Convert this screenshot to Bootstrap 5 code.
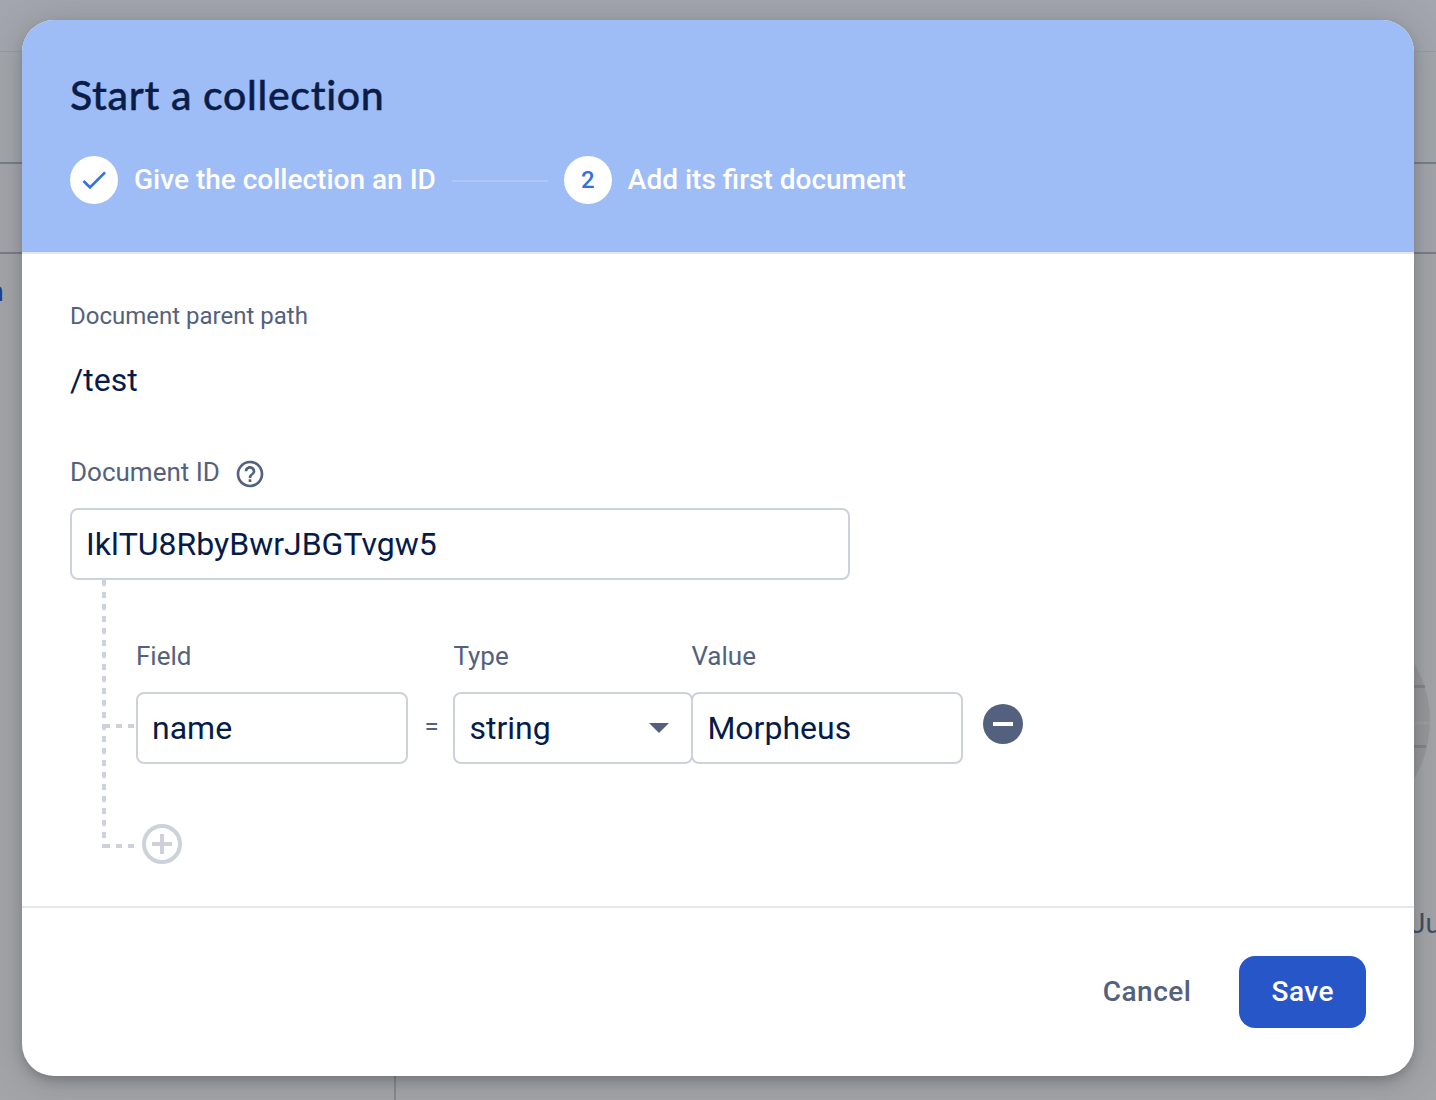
<!DOCTYPE html>
<html lang="en">
<head>
<meta charset="utf-8">
<meta name="viewport" content="width=device-width, initial-scale=1">
<title>Start a collection</title>
<link href="https://cdn.jsdelivr.net/npm/bootstrap@5.3.0/dist/css/bootstrap.min.css" rel="stylesheet">
<style>
html, body { height: 1100px; overflow: hidden; }
body { font-family: Roboto, "Noto Sans", sans-serif; background: #a4a5a8; color: #061b49; padding: 20px 22px; }
.bg-page { z-index: 0; color: #434d64; }
.bg-top { height: 52px; background: #a3a6ae; border-bottom: 1px solid #999ca2; }
.bg-title { height: 112px; background: #a3a6ab; border-bottom: 2px solid #777d8a; }
.bg-tools { height: 90px; background: #a3a5ab; border-bottom: 2px solid #777d8a; }
.bg-side { width: 396px; border-right: 2px solid #858992; }
.bg-link { color: #1d3f94; font-size: 28px; font-weight: 500; left: -12px; top: 20px; line-height: 36px; }
.bg-art { right: 6px; top: 354px; width: 226px; height: 226px; }
.bg-note { left: 1410px; top: 652px; font-size: 28px; line-height: 36px; white-space: nowrap; }
.dialog { z-index: 1; height: 1056px; border: 0; border-radius: 32px; overflow: hidden;
  box-shadow: 0 6px 12px -2px rgba(40,48,52,.3), 0 4px 36px 2px rgba(60,66,66,.22); }
.dialog-head { height: 234px; padding: 48px; background: #9ebcf6; border-bottom: 2px solid #e6e7ec; }
.dialog-title { font-family: Lato, sans-serif; font-size: 41px; line-height: 54px; font-weight: 500; letter-spacing: .67px; color: #0a1c48; margin: 0 0 34px; -webkit-text-stroke: .45px #0a1c48; }
.step-dot { width: 48px; height: 48px; background: #fff; color: #3570e3; font-size: 24px; font-weight: 500; }
.step-text { font-size: 28px; line-height: 48px; font-weight: 500; color: #fff; }
.step-rule { width: 96px; height: 2px; margin: 1px 16px 0; background: #afc8f8; }
.dialog-main { height: 654px; padding: 46px 48px 0; border-bottom: 2px solid #e6e7ec; }
.tx-muted { color: #54617e; }
.cap-sm { font-size: 24px; line-height: 32px; }
.cap-md { font-size: 26px; line-height: 32px; }
.path-text { font-size: 32px; line-height: 40px; margin-top: 28px; }
.id-row { margin-top: 52px; height: 40px; margin-bottom: 16px; }
.help { margin: 4px 0 0 14px; }
.dialog .form-control { height: 72px; border: 2px solid #cdd1db; border-radius: 8px; font-size: 32px; line-height: 40px; padding: 0 14px; color: #061b49; background-color: #fff; }
.id-input { width: 780px; }
.tree { width: 66px; height: 272px; flex: none; }
.fields { padding-top: 60px; }
.cap-row { height: 32px; margin-bottom: 20px; }
.dialog .w-field { width: 272px; }
.dialog .w-type { width: 240px; margin-right: -2px; }
.eq { width: 45.400px; font-size: 26px; padding-left: 2px; margin-top: -4px; }
.dialog .pick { cursor: pointer; }
.pick svg { margin-right: 8px; }
.remove-btn { margin: -8px 0 0 20px; }
.add-btn { margin: 60px 0 0 6px; }
.bare { border: 0; background: none; padding: 0; line-height: 0; }
.dialog-foot { height: 168px; padding: 48px; gap: 16px; }
.dialog-foot .btn { height: 72px; font-size: 28px; font-weight: 500; letter-spacing: .5px; border: 0; border-radius: 16px; padding: 0 32px; }
.btn-save { --bs-btn-bg: #2756c9; --bs-btn-color: #fff; --bs-btn-hover-bg: #2049b0; --bs-btn-hover-color: #fff; }
</style>
</head>
<body>
<div class="bg-page position-absolute top-0 start-0 w-100 h-100 d-flex flex-column overflow-hidden" aria-hidden="true">
  <div class="bg-top"></div>
  <div class="bg-title"></div>
  <div class="bg-tools"></div>
  <div class="d-flex flex-grow-1 position-relative">
    <div class="bg-side"></div>
    <span class="bg-link position-absolute">n</span>
    <svg class="bg-art position-absolute" viewBox="0 0 226 226"><circle cx="113" cy="113" r="113" fill="#97989a"/><path d="M0 78.500h221M0 138.500h222" stroke="#838487" stroke-width="3"/><path d="M0 115h226" stroke="#9d9ea0" stroke-width="3"/></svg>
    <span class="bg-note position-absolute">Ju</span>
  </div>
</div>

<main class="dialog card position-relative">
  <header class="dialog-head">
    <h1 class="dialog-title">Start a collection</h1>
    <div class="d-flex align-items-center">
      <span class="step-dot rounded-circle d-flex align-items-center justify-content-center me-3">
        <svg width="32" height="32" viewBox="0 0 24 24" fill="currentColor"><path d="M9 16.170L4.830 12l-1.420 1.410L9 19 21 7l-1.410-1.410z"/></svg>
      </span>
      <span class="step-text">Give the collection an ID</span>
      <span class="step-rule"></span>
      <span class="step-dot rounded-circle d-flex align-items-center justify-content-center me-3">2</span>
      <span class="step-text">Add its first document</span>
    </div>
  </header>

  <section class="dialog-main">
    <div class="cap-sm tx-muted">Document parent path</div>
    <div class="path-text">/test</div>
    <div class="id-row d-flex align-items-center tx-muted">
      <label class="cap-md" for="docId">Document ID</label>
      <svg class="help" width="32" height="32" viewBox="0 0 24 24" fill="currentColor"><path d="M11 18h2v-2h-2v2zm1-16C6.480 2 2 6.480 2 12s4.480 10 10 10 10-4.480 10-10S17.520 2 12 2zm0 18c-4.410 0-8-3.590-8-8s3.590-8 8-8 8 3.590 8 8-3.590 8-8 8zm0-14c-2.210 0-4 1.790-4 4h2c0-1.100.9-2 2-2s2 .9 2 2c0 2-3 1.750-3 5h2c0-2.250 3-2.500 3-5 0-2.210-1.790-4-4-4z"/></svg>
    </div>
    <input id="docId" class="form-control id-input" value="IklTU8RbyBwrJBGTvgw5">
    <div class="d-flex">
      <svg class="tree" viewBox="0 0 66 272" fill="none" stroke="#cdd1da" stroke-width="4" stroke-dasharray="6 6"><path d="M34 0V264"/><path d="M34 146H64M34 266H64"/><path d="M32 266h4" stroke-dasharray="none"/></svg>
      <div class="fields">
        <div class="cap-row cap-md tx-muted d-flex">
          <label class="w-field" for="fName">Field</label><span class="eq"></span>
          <label class="w-type" for="fType">Type</label>
          <label class="w-field" for="fValue">Value</label>
        </div>
        <div class="d-flex align-items-center">
          <input id="fName" class="form-control w-field" value="name">
          <span class="eq tx-muted text-center">=</span>
          <div id="fType" class="form-control pick w-type d-flex align-items-center justify-content-between" role="combobox" tabindex="0">string
            <svg width="20" height="10" viewBox="0 0 20 10"><path d="M0 0h20L10 10z" fill="#54617e"/></svg>
          </div>
          <input id="fValue" class="form-control w-field" value="Morpheus">
          <button class="bare remove-btn" aria-label="Remove field"><svg width="40" height="40" viewBox="0 0 40 40"><circle cx="20" cy="20" r="20" fill="#54617e"/><path d="M10 20h20" stroke="#fff" stroke-width="4"/></svg></button>
        </div>
        <button class="bare add-btn d-block" aria-label="Add field"><svg width="40" height="40" viewBox="0 0 40 40" fill="none" stroke="#cdd1da" stroke-width="4"><circle cx="20" cy="20" r="18"/><path d="M10 20h20M20 10v20"/></svg></button>
      </div>
    </div>
  </section>

  <footer class="dialog-foot d-flex justify-content-end">
    <button class="btn tx-muted">Cancel</button>
    <button class="btn btn-save">Save</button>
  </footer>
</main>
<script src="https://cdn.jsdelivr.net/npm/bootstrap@5.3.0/dist/js/bootstrap.bundle.min.js"></script>
</body>
</html>
